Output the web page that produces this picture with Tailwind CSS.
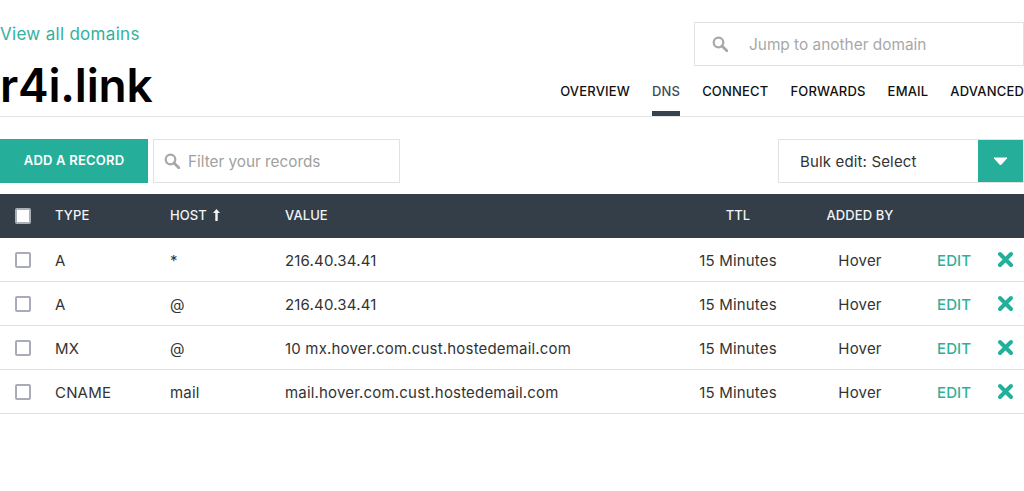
<!DOCTYPE html>
<html>
<head>
<script src="https://cdn.jsdelivr.net/npm/@tailwindcss/browser@4"></script>
</head>
<body class="bg-white font-['Inter',sans-serif] text-[#333]">
<div class="w-[1024px] h-[491px] overflow-hidden">
  <header class="h-[117px] border-b border-[#e4e4e4] flex justify-between">
    <div class="pt-[22px]">
      <a class="block text-[17px] leading-[24px] text-[#35b09c] tracking-[0.3px]">View all domains</a>
      <h1 class="mt-[11px] text-[46px] leading-[56px] font-semibold text-black tracking-[-0.2px]">r4i.link</h1>
    </div>
    <div class="flex flex-col items-end pt-[22px]">
      <div class="w-[330px] h-[44px] border border-[#e2e2e2] flex items-center pl-[17px] text-[15.4px] text-[#a8a8a8]">
        <svg class="w-[16px] h-[16px] mr-[21px]" viewBox="0 0 16 16" fill="none" stroke="#a8a8a8"><circle cx="6.5" cy="6.5" r="4.8" stroke-width="2.2"/><path d="M10 10l4.8 4.8" stroke-width="2.8" stroke-linecap="round"/></svg>
        <span class="pt-[1px]">Jump to another domain</span>
      </div>
      <nav class="flex gap-[22px] mt-[6px] text-[13px] font-medium text-[#111] tracking-[0.18px]">
        <a class="h-[44px] leading-[38px]">OVERVIEW</a>
        <a class="h-[44px] leading-[38px] text-[#414c57] border-b-[5px] border-[#36424e]">DNS</a>
        <a class="h-[44px] leading-[38px]">CONNECT</a>
        <a class="h-[44px] leading-[38px]">FORWARDS</a>
        <a class="h-[44px] leading-[38px]">EMAIL</a>
        <a class="h-[44px] leading-[38px]">ADVANCED</a>
      </nav>
    </div>
  </header>

  <div class="flex justify-between items-start mt-[22px]">
    <div class="flex gap-[5px]">
      <button class="w-[148px] h-[44px] bg-[#25ae9a] text-white text-[13px] font-semibold tracking-[0.2px]">ADD A RECORD</button>
      <div class="w-[247px] h-[44px] border border-[#e2e2e2] flex items-center pl-[10px] text-[15.3px] text-[#a0a0a0]">
        <svg class="w-[16px] h-[16px] mr-[8px]" viewBox="0 0 16 16" fill="none" stroke="#a8a8a8"><circle cx="6.5" cy="6.5" r="4.8" stroke-width="2.2"/><path d="M10 10l4.8 4.8" stroke-width="2.8" stroke-linecap="round"/></svg>
        <span class="pt-[2px]">Filter your records</span>
      </div>
    </div>
    <div class="w-[246px] h-[44px] border border-[#e2e2e2] flex items-center justify-between text-[15px] text-[#333] pl-[21px]">
      <span class="tracking-[0.15px] pt-[2px]">Bulk edit: Select</span>
      <span class="w-[45px] h-[42px] bg-[#25ae9a] flex items-center justify-center">
        <svg class="w-[15px] h-[9px]" viewBox="0 0 15 9"><path d="M1 1h13L7.5 8z" fill="#fff" stroke="#fff" stroke-linejoin="round"/></svg>
      </span>
    </div>
  </div>

  <div class="mt-[11px]">
    <div class="h-[44px] bg-[#333e49] text-[13px] font-medium text-[#f2f3f4] grid grid-cols-[55px_115px_115px_398px_110px_134px_1fr] items-center tracking-[0.1px]">
      <span class="w-[16px] h-[16px] ml-[15px] bg-white border-2 border-[#aab0b8] rounded-[2px]"></span>
      <span>TYPE</span>
      <span class="flex items-center gap-[6px]">HOST <svg class="w-[7px] h-[12px] mb-[2px]" viewBox="0 0 7 12" fill="#f2f3f4"><path d="M3.5 0L7 4H4.7V12H2.3V4H0z"/></svg></span>
      <span>VALUE</span>
      <span class="text-center">TTL</span>
      <span class="text-center">ADDED BY</span>
      <span></span>
    </div>
    <div class="h-[44px] border-b border-[#e2e2e2] text-[15px] grid grid-cols-[55px_115px_115px_398px_110px_134px_1fr] items-center tracking-[0.18px]">
      <span class="w-[16px] h-[16px] ml-[15px] bg-white border-2 border-[#a9acb8] rounded-[2px]"></span>
      <span class="pt-[4px]">A</span>
      <span class="pt-[4px]">*</span>
      <span class="pt-[4px]">216.40.34.41</span>
      <span class="pt-[4px] text-center">15 Minutes</span>
      <span class="pt-[4px] text-center">Hover</span>
      <span class="flex items-center justify-between pl-[10px] pr-[10px] text-[#2fb09c]"><a class="pt-[4px] font-medium tracking-[0.1px]">EDIT</a><svg class="w-[17px] h-[17px]" viewBox="0 0 17 17" stroke="#25ae9a" stroke-width="4" stroke-linecap="round"><path d="M3 3l11 11M14 3L3 14"/></svg></span>
    </div>
    <div class="h-[44px] border-b border-[#e2e2e2] text-[15px] grid grid-cols-[55px_115px_115px_398px_110px_134px_1fr] items-center tracking-[0.18px]">
      <span class="w-[16px] h-[16px] ml-[15px] bg-white border-2 border-[#a9acb8] rounded-[2px]"></span>
      <span class="pt-[4px]">A</span>
      <span class="pt-[4px]">@</span>
      <span class="pt-[4px]">216.40.34.41</span>
      <span class="pt-[4px] text-center">15 Minutes</span>
      <span class="pt-[4px] text-center">Hover</span>
      <span class="flex items-center justify-between pl-[10px] pr-[10px] text-[#2fb09c]"><a class="pt-[4px] font-medium tracking-[0.1px]">EDIT</a><svg class="w-[17px] h-[17px]" viewBox="0 0 17 17" stroke="#25ae9a" stroke-width="4" stroke-linecap="round"><path d="M3 3l11 11M14 3L3 14"/></svg></span>
    </div>
    <div class="h-[44px] border-b border-[#e2e2e2] text-[15px] grid grid-cols-[55px_115px_115px_398px_110px_134px_1fr] items-center tracking-[0.18px]">
      <span class="w-[16px] h-[16px] ml-[15px] bg-white border-2 border-[#a9acb8] rounded-[2px]"></span>
      <span class="pt-[4px]">MX</span>
      <span class="pt-[4px]">@</span>
      <span class="pt-[4px]">10 mx.hover.com.cust.hostedemail.com</span>
      <span class="pt-[4px] text-center">15 Minutes</span>
      <span class="pt-[4px] text-center">Hover</span>
      <span class="flex items-center justify-between pl-[10px] pr-[10px] text-[#2fb09c]"><a class="pt-[4px] font-medium tracking-[0.1px]">EDIT</a><svg class="w-[17px] h-[17px]" viewBox="0 0 17 17" stroke="#25ae9a" stroke-width="4" stroke-linecap="round"><path d="M3 3l11 11M14 3L3 14"/></svg></span>
    </div>
    <div class="h-[44px] border-b border-[#e2e2e2] text-[15px] grid grid-cols-[55px_115px_115px_398px_110px_134px_1fr] items-center tracking-[0.18px]">
      <span class="w-[16px] h-[16px] ml-[15px] bg-white border-2 border-[#a9acb8] rounded-[2px]"></span>
      <span class="pt-[4px]">CNAME</span>
      <span class="pt-[4px]">mail</span>
      <span class="pt-[4px]">mail.hover.com.cust.hostedemail.com</span>
      <span class="pt-[4px] text-center">15 Minutes</span>
      <span class="pt-[4px] text-center">Hover</span>
      <span class="flex items-center justify-between pl-[10px] pr-[10px] text-[#2fb09c]"><a class="pt-[4px] font-medium tracking-[0.1px]">EDIT</a><svg class="w-[17px] h-[17px]" viewBox="0 0 17 17" stroke="#25ae9a" stroke-width="4" stroke-linecap="round"><path d="M3 3l11 11M14 3L3 14"/></svg></span>
    </div>
  </div>
</div>
</body>
</html>
